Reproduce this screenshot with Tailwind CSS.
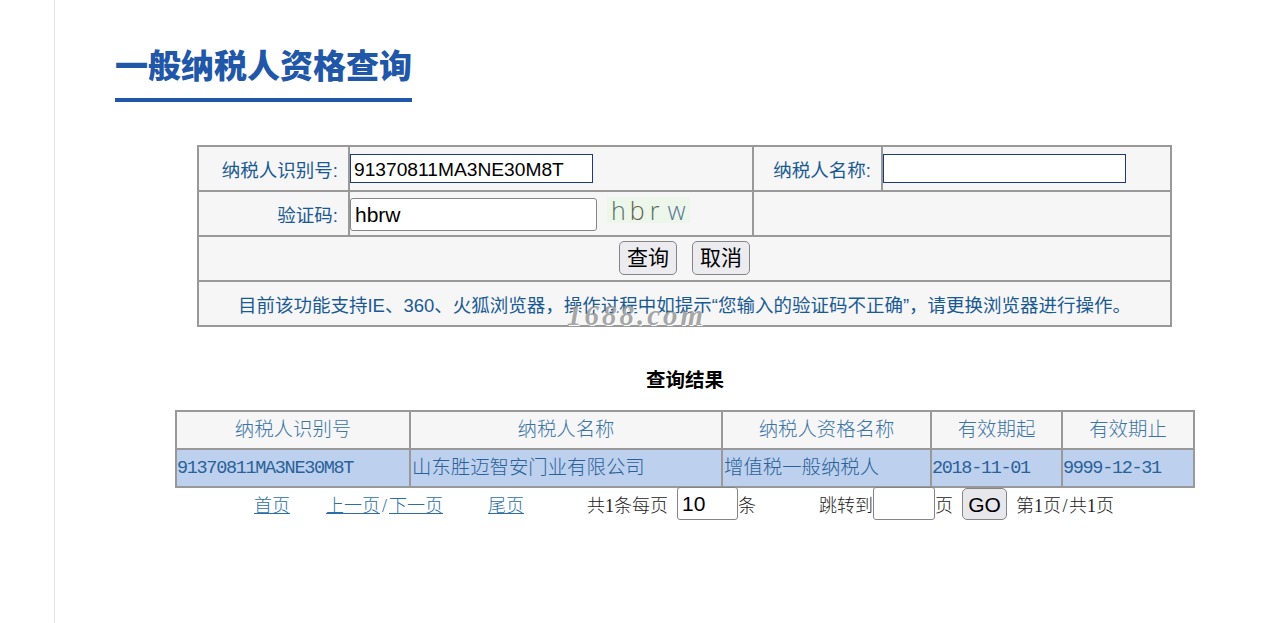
<!DOCTYPE html>
<html lang="zh-CN">
<head>
    <meta charset="UTF-8">
    <title>一般纳税人资格查询</title>
    <script src="https://cdn.jsdelivr.net/npm/@tailwindcss/browser@4"></script>
</head>
<body class="bg-white h-screen overflow-hidden font-['Liberation_Sans','Noto_Sans_CJK_SC',sans-serif]">
    <div class="ml-[54px] h-full border-l border-[#e4e4e4] relative">
        <!-- Title -->
        <div class="pl-[60px] pt-[41px]">
            <h1 class="inline-block h-[61px] border-b-4 border-[#2157a8] text-[33px] leading-[52px] font-black text-[#2157a8]">一般纳税人资格查询</h1>
        </div>

        <!-- Search form -->
        <table class="ml-[142px] mt-[43px] w-[975px] table-fixed border-collapse bg-[#f6f6f6] text-[18.5px] text-[#1a5a94]">
            <colgroup>
                <col class="w-[151px]">
                <col class="w-[404px]">
                <col class="w-[129px]">
                <col>
            </colgroup>
            <tbody>
                <tr class="h-[45px]">
                    <td class="border-2 border-[#999] text-right pr-[10px] pt-[4px]">纳税人识别号:</td>
                    <td class="border-2 border-[#999] p-0">
                        <input type="text" value="91370811MA3NE30M8T" class="block w-[243px] h-[29px] px-[3px] pt-[2px] border border-[#1c3b78] bg-white text-[19.2px] text-black outline-none">
                    </td>
                    <td class="border-2 border-[#999] text-right pr-[10px] pt-[4px]">纳税人名称:</td>
                    <td class="border-2 border-[#999] p-0">
                        <input type="text" class="block w-[243px] h-[29px] px-[3px] border border-[#1c3b78] bg-white outline-none">
                    </td>
                </tr>
                <tr class="h-[45px]">
                    <td class="border-2 border-[#999] text-right pr-[10px] pt-[4px]">验证码:</td>
                    <td class="border-2 border-[#999] p-0">
                        <div class="flex items-center pt-[2px]">
                            <input type="text" value="hbrw" class="block w-[247px] h-[33px] px-[4px] border border-[#858585] rounded-[3px] bg-white text-[21px] text-black outline-none">
                            <div class="ml-[10px] -mt-[9px] w-[83px] h-[26px] bg-[#edf6ea] flex items-center text-[25px] leading-none font-light font-['Open_Sans',sans-serif]">
                                <span class="ml-[4px] text-[#55735f]">h</span>
                                <span class="ml-[4px] text-[#5f614a]">b</span>
                                <span class="ml-[5px] text-[#4f6f58]">r</span>
                                <span class="ml-[8px] text-[#5a7896]">w</span>
                            </div>
                        </div>
                    </td>
                    <td colspan="2" class="border-2 border-[#999]"></td>
                </tr>
                <tr class="h-[45px]">
                    <td colspan="4" class="border-2 border-[#999] p-0">
                        <div class="flex justify-center gap-[15px] -mt-[2px]">
                            <button class="w-[58px] h-[34px] border border-[#858585] rounded-[5px] bg-[#ececf0] text-[21px] text-black">查询</button>
                            <button class="w-[58px] h-[34px] border border-[#858585] rounded-[5px] bg-[#ececf0] text-[21px] text-black">取消</button>
                        </div>
                    </td>
                </tr>
                <tr class="h-[45px]">
                    <td colspan="4" class="border-2 border-[#999] text-center pt-[4px]">目前该功能支持IE、360、火狐浏览器&#65292;操作过程中如提示&#8220;您输入的验证码不正确&#8221;&#65292;请更换浏览器进行操作。</td>
                </tr>
            </tbody>
        </table>

        <!-- Results -->
        <h2 class="ml-[591px] mt-[40px] h-[43px] text-[19.5px] leading-[26px] font-bold text-black">查询结果</h2>
        <table class="ml-[120px] w-[1020px] table-fixed border-collapse text-[19.4px] font-light text-[#2a6199]">
            <colgroup>
                <col class="w-[234px]">
                <col class="w-[312px]">
                <col class="w-[209px]">
                <col class="w-[131px]">
                <col>
            </colgroup>
            <thead class="bg-[#f6f6f6] text-[#3a74a6]">
                <tr class="h-[38px]">
                    <th class="border-2 border-[#999] font-light">纳税人识别号</th>
                    <th class="border-2 border-[#999] font-light">纳税人名称</th>
                    <th class="border-2 border-[#999] font-light">纳税人资格名称</th>
                    <th class="border-2 border-[#999] font-light">有效期起</th>
                    <th class="border-2 border-[#999] font-light">有效期止</th>
                </tr>
            </thead>
            <tbody class="bg-[#bdd1ee]">
                <tr class="h-[38px]">
                    <td class="border-2 border-[#999] p-0 pt-[2px] font-['Liberation_Mono',monospace] text-[18.5px] tracking-[-1.32px]">91370811MA3NE30M8T</td>
                    <td class="border-2 border-[#999] p-0 pl-px">山东胜迈智安门业有限公司</td>
                    <td class="border-2 border-[#999] p-0 pl-px">增值税一般纳税人</td>
                    <td class="border-2 border-[#999] p-0 pt-[2px] font-['Liberation_Mono',monospace] text-[18.5px] tracking-[-1.32px]">2018-11-01</td>
                    <td class="border-2 border-[#999] p-0 pt-[2px] font-['Liberation_Mono',monospace] text-[18.5px] tracking-[-1.32px]">9999-12-31</td>
                </tr>
            </tbody>
        </table>

        <!-- Pagination -->
        <div class="ml-[199px] -mt-[2px] flex items-center h-[34px] text-[18px] font-light text-[#222] font-['Liberation_Serif','Noto_Sans_CJK_SC',serif]">
            <a href="#" class="mt-[6px] underline text-[#2a6fa8]">首页</a>
            <span class="ml-[36px] mt-[6px] text-[#2a6fa8]"><a href="#" class="underline">上一页</a><span class="inline-block w-[9px] text-center">/</span><a href="#" class="underline">下一页</a></span>
            <a href="#" class="ml-[45px] mt-[6px] underline text-[#2a6fa8]">尾页</a>
            <span class="ml-[63px] mt-[6px]">共1条每页</span>
            <input type="text" value="10" class="ml-[9px] w-[61px] h-[33px] px-[4px] pt-[2px] border border-[#858585] rounded-[3px] bg-white text-[21px] text-black font-['Liberation_Sans'] outline-none">
            <span class="mt-[6px]">条</span>
            <span class="ml-[63px] mt-[6px]">跳转到</span>
            <input type="text" class="w-[62px] h-[33px] border border-[#858585] rounded-[3px] bg-white outline-none">
            <span class="mt-[6px]">页</span>
            <button class="ml-[9px] mt-[2px] w-[45px] h-[32px] border border-[#858585] rounded-[5px] bg-[#e7e7ec] text-[21px] text-black font-['Liberation_Sans']">GO</button>
            <span class="ml-[9px] mt-[6px]">第1页<span class="inline-block w-[8px] text-center">/</span>共1页</span>
        </div>

        <!-- Watermark over the notice row -->
        <div class="absolute left-[512px] top-[301px] text-[29px] leading-none font-bold italic tracking-[3px] text-[#808080]/70 font-['Liberation_Serif',serif] [text-shadow:1px_1px_0_#fff]">1688.com</div>
    </div>
</body>
</html>
